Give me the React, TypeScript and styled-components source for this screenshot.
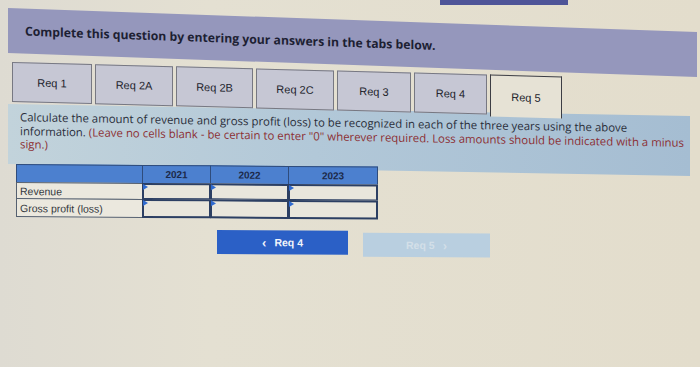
import React from "react";
import styled, { createGlobalStyle } from "styled-components";

const Global = createGlobalStyle`
  html, body { margin: 0; padding: 0; }
  body {
    width: 700px;
    height: 367px;
    overflow: hidden;
    background: linear-gradient(90deg, #dedbd2 0%, #e4e0d2 30%, #e3ddcc 100%);
    font-family: "Open Sans", "DejaVu Sans", sans-serif;
  }
`;

const Page = styled.div`
  width: 700px;
  height: 367px;
  display: flex;
  flex-direction: column;
`;

const TopStrip = styled.div`
  height: 8px;
  display: flex;
`;

const TopBarPiece = styled.div`
  margin-left: 440px;
  width: 128px;
  height: 5px;
  background: #4e5498;
`;

const Tilted = styled.div<{ $tilt: number }>`
  transform: skewY(${(p) => p.$tilt}deg);
  transform-origin: 0 0;
`;

const Header = styled(Tilted)`
  margin: 0 3px 0 8px;
  height: 45px;
  background: #9597bc;
  display: flex;
  align-items: center;
  padding-left: 17px;
  font-weight: 700;
  font-size: 12.2px;
  color: #1d1f33;
`;

const TabRow = styled(Tilted)`
  margin-top: 9px;
  margin-left: 12px;
  display: flex;
  gap: 3px;
  height: 40px;
  position: relative;
  z-index: 1;
`;

const Tab = styled.div<{ $active?: boolean; $w: number }>`
  width: ${(p) => p.$w}px;
  height: ${(p) => (p.$active ? 42 : 40)}px;
  box-sizing: border-box;
  border: 1px solid ${(p) => (p.$active ? "#3c3d44" : "#777882")};
  border-bottom: ${(p) => (p.$active ? "none" : "1px solid #777882")};
  background: ${(p) => (p.$active ? "#e6e2d5" : "#c6c7d4")};
  display: flex;
  align-items: center;
  justify-content: center;
  font-family: "Liberation Sans", Arial, sans-serif;
  font-size: 11px;
  color: #22232c;
`;

const Panel = styled(Tilted)`
  margin: 2px 10px 0 8px;
  height: 60px;
  box-sizing: border-box;
  padding: 6px 3px 0 12px;
  background: linear-gradient(90deg, #c2d3db 0%, #b2c8d8 45%, #a5bdd2 100%);
  font-size: 11.4px;
  line-height: 13.5px;
  color: #2a2e3a;
`;

const Note = styled.span`
  color: #8c2f33;
`;

const Table = styled(Tilted)`
  margin: 0 0 0 16px;
  display: grid;
  grid-template-columns: 127px 68px 78px 89px;
  grid-template-rows: 19px 16px 18px;
  width: 362px;
  font-family: "Liberation Sans", Arial, sans-serif;
`;

const HeadCell = styled.div<{ $first?: boolean }>`
  background: #4c80cf;
  border: 1px solid #2f4c7c;
  margin-left: ${(p) => (p.$first ? 0 : -1)}px;
  display: flex;
  align-items: center;
  justify-content: center;
  font-size: 10px;
  font-weight: 700;
  color: #1c2a4a;
`;

const LabelCell = styled.div`
  background: #ebe8de;
  border: 1px solid #556070;
  margin-top: -1px;
  display: flex;
  align-items: center;
  padding-left: 3px;
  font-size: 10.5px;
  color: #333840;
`;

const InputCell = styled.div`
  position: relative;
  background: #e9e6dc;
  border: 2px solid #2c3f63;
  margin: -1px 0 0 -1px;
`;

const Flag = styled.span`
  position: absolute;
  top: -1px;
  left: -1px;
  width: 0;
  height: 0;
  border-top: 3px solid transparent;
  border-bottom: 3px solid transparent;
  border-left: 5px solid #2f6ad0;
`;

const ButtonRow = styled(Tilted)`
  margin: 13px 0 0 217px;
  display: flex;
  gap: 15px;
`;

const NavButton = styled.div<{ $primary?: boolean }>`
  width: ${(p) => (p.$primary ? 131 : 127)}px;
  height: 24px;
  margin-top: ${(p) => (p.$primary ? 0 : 2)}px;
  background: ${(p) => (p.$primary ? "#2b60c6" : "#b9cfe0")};
  display: flex;
  align-items: center;
  justify-content: center;
  gap: 8px;
  font-family: "Liberation Sans", Arial, sans-serif;
  font-size: 10.5px;
  font-weight: 700;
  color: ${(p) => (p.$primary ? "#f2f5fb" : "#d3dfe8")};
`;

const Chevron = styled.span`
  font-size: 13px;
  line-height: 1;
`;

const tabs: { label: string; w: number; active?: boolean }[] = [
  { label: "Req 1", w: 80 },
  { label: "Req 2A", w: 78 },
  { label: "Req 2B", w: 77 },
  { label: "Req 2C", w: 78 },
  { label: "Req 3", w: 74 },
  { label: "Req 4", w: 73 },
  { label: "Req 5", w: 72, active: true },
];

const years = ["2021", "2022", "2023"];
const rows = ["Revenue", "Gross profit (loss)"];

export default function App() {
  return (
    <>
      <Global />
      <Page>
        <TopStrip>
          <TopBarPiece />
        </TopStrip>
        <Header $tilt={2}>Complete this question by entering your answers in the tabs below.</Header>
        <TabRow $tilt={1.5}>
          {tabs.map((t) => (
            <Tab key={t.label} $w={t.w} $active={t.active}>
              {t.label}
            </Tab>
          ))}
        </TabRow>
        <Panel $tilt={1}>
          Calculate the amount of revenue and gross profit (loss) to be recognized in each of the three years using the above
          information. <Note>(Leave no cells blank - be certain to enter "0" wherever required. Loss amounts should be indicated with a minus sign.)</Note>
        </Panel>
        <Table $tilt={0.4}>
          <HeadCell $first />
          {years.map((y) => (
            <HeadCell key={y}>{y}</HeadCell>
          ))}
          {rows.map((r) => (
            <React.Fragment key={r}>
              <LabelCell>{r}</LabelCell>
              {years.map((y) => (
                <InputCell key={y}>
                  <Flag />
                </InputCell>
              ))}
            </React.Fragment>
          ))}
        </Table>
        <ButtonRow $tilt={0.3}>
          <NavButton $primary>
            <Chevron>&lsaquo;</Chevron>
            <span>Req 4</span>
          </NavButton>
          <NavButton>
            <span>Req 5</span>
            <Chevron>&rsaquo;</Chevron>
          </NavButton>
        </ButtonRow>
      </Page>
    </>
  );
}
